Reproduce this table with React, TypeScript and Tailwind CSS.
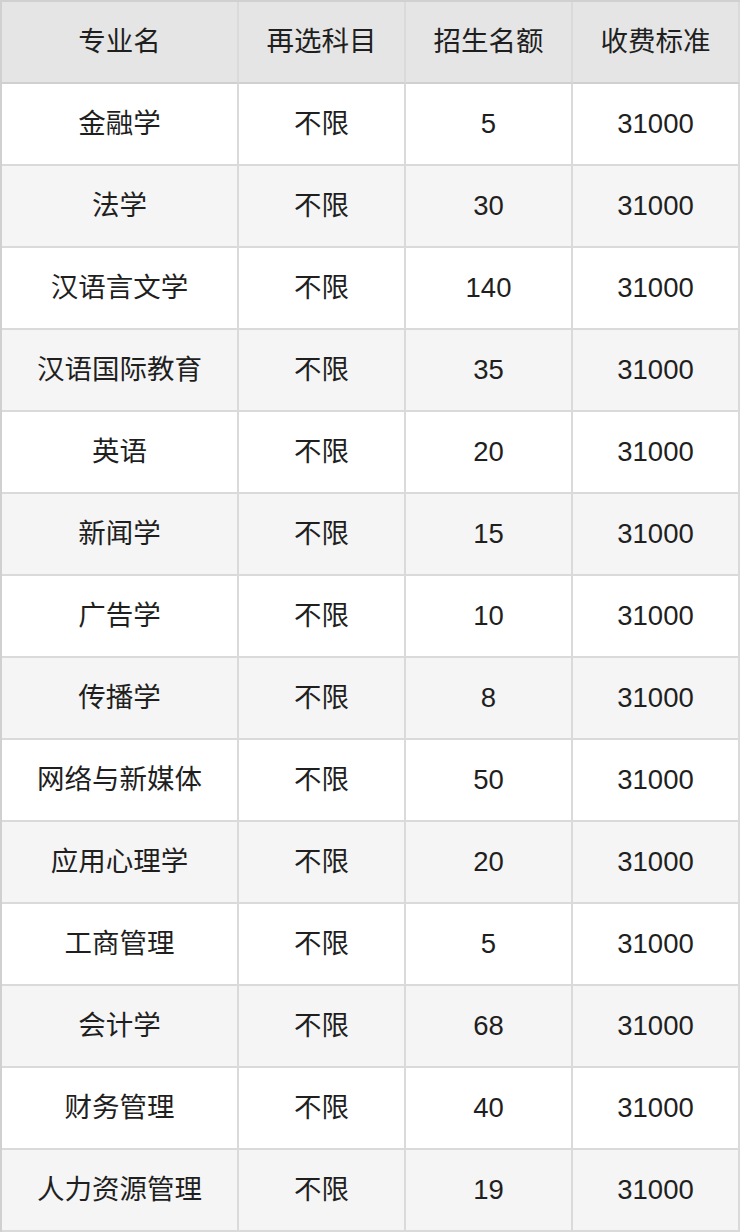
const rows: [string, string, string, string][] = [
  ["金融学", "不限", "5", "31000"],
  ["法学", "不限", "30", "31000"],
  ["汉语言文学", "不限", "140", "31000"],
  ["汉语国际教育", "不限", "35", "31000"],
  ["英语", "不限", "20", "31000"],
  ["新闻学", "不限", "15", "31000"],
  ["广告学", "不限", "10", "31000"],
  ["传播学", "不限", "8", "31000"],
  ["网络与新媒体", "不限", "50", "31000"],
  ["应用心理学", "不限", "20", "31000"],
  ["工商管理", "不限", "5", "31000"],
  ["会计学", "不限", "68", "31000"],
  ["财务管理", "不限", "40", "31000"],
  ["人力资源管理", "不限", "19", "31000"],
];

const headers = ["专业名", "再选科目", "招生名额", "收费标准"];

const cell = "flex items-center justify-center border-r-2 border-b-2 border-[#dadada] h-[82px]";
const widths = ["w-[237px]", "w-[167px]", "w-[167px]", "w-[167px]"];

export default function App() {
  return (
    <div
      className="w-[740px] bg-white text-[27.5px] text-[#1f1f1f]"
      style={{ fontFamily: '"Liberation Sans", "Noto Sans CJK SC", sans-serif' }}
    >
      <div className="border-l-2 border-t-2 border-[#d0d0d0]">
        <div className="flex bg-[#e5e5e5]">
          {headers.map((h, i) => (
            <div key={i} className={`${cell} ${widths[i]} border-b-[#d0d0d0]`}>{h}</div>
          ))}
        </div>
        {rows.map((r, ri) => (
          <div key={ri} className={`flex ${ri % 2 === 1 ? "bg-[#f5f5f5]" : "bg-white"}`}>
            {r.map((v, i) => (
              <div key={i} className={`${cell} ${widths[i]}`}>{v}</div>
            ))}
          </div>
        ))}
      </div>
    </div>
  );
}
